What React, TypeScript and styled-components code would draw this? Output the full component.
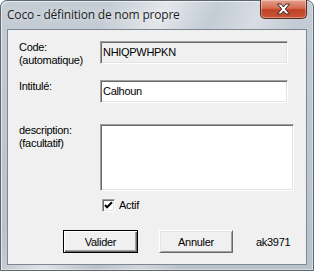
import styled, { createGlobalStyle } from 'styled-components'

const GlobalStyle = createGlobalStyle`
  html, body {
    margin: 0;
    padding: 0;
    background: #ffffff;
  }
`

const Window = styled.div`
  width: 314px;
  height: 271px;
  box-sizing: border-box;
  display: flex;
  flex-direction: column;
  padding: 0 6px 5px;
  border: 1px solid #5d6770;
  border-radius: 7px 7px 0 0;
  background:
    linear-gradient(115deg, rgba(255, 255, 255, 0) 25%, rgba(255, 255, 255, 0.55) 38%, rgba(255, 255, 255, 0) 50%, rgba(255, 255, 255, 0.35) 60%, rgba(255, 255, 255, 0) 70%),
    linear-gradient(180deg, #c4ccd5 0%, #bfc7cf 40%, #b9c1c9 100%);
  box-shadow: inset 1px 1px 0 rgba(255, 255, 255, 0.6), inset -1px -1px 0 rgba(255, 255, 255, 0.4);
`

const TitleBar = styled.div`
  height: 28px;
  display: flex;
  align-items: flex-start;
  justify-content: space-between;
`

const Title = styled.span`
  padding-top: 6px;
  font-family: 'Open Sans', 'Liberation Sans', sans-serif;
  font-size: 12px;
  line-height: 16px;
  color: #1e1e1e;
  letter-spacing: -0.2px;
  text-shadow: 0 0 6px rgba(255, 255, 255, 0.9);
`

const CloseButton = styled.div`
  width: 47px;
  height: 19px;
  margin-top: -1px;
  box-sizing: border-box;
  display: flex;
  align-items: center;
  justify-content: center;
  border: 1px solid #5a2a22;
  border-top: none;
  border-radius: 0 0 5px 5px;
  background: linear-gradient(180deg, #e6a090 0%, #d56c52 45%, #bf4226 55%, #cc5434 100%);
  box-shadow: inset 0 0 0 1px rgba(255, 255, 255, 0.35);
`

const Client = styled.div`
  flex: 1;
  border: 1px solid #7e8892;
  background: #f0f0f0;
  font-family: 'Liberation Sans', Arial, sans-serif;
  font-size: 11px;
  line-height: 13px;
  letter-spacing: -0.3px;
  color: #000000;
  display: flex;
  flex-direction: column;
  padding: 11px 0 0 11px;
`

const Row = styled.div<{ $gap: number; $height: number }>`
  display: flex;
  align-items: flex-start;
  height: ${({ $height }) => $height}px;
  margin-bottom: ${({ $gap }) => $gap}px;
`

const Label = styled.div`
  width: 81px;
  white-space: nowrap;
`

const Field = styled.input<{ $readOnly?: boolean }>`
  width: 188px;
  height: 23px;
  box-sizing: border-box;
  margin: 0;
  padding: 0 2px 1px;
  font-family: 'Liberation Sans', Arial, sans-serif;
  font-size: 11px;
  letter-spacing: -0.3px;
  color: #000000;
  outline: none;
  background: ${({ $readOnly }) => ($readOnly ? '#f0f0f0' : '#ffffff')};
  border-style: solid;
  border-width: 1px;
  border-color: #a0a0a0 #ffffff #ffffff #a0a0a0;
  box-shadow: inset 1px 1px 0 #696969, inset -1px -1px 0 #e3e3e3;
`

const TextArea = styled.textarea`
  width: 194px;
  height: 67px;
  box-sizing: border-box;
  margin: 0;
  padding: 2px;
  resize: none;
  outline: none;
  background: #ffffff;
  border-style: solid;
  border-width: 1px;
  border-color: #a0a0a0 #ffffff #ffffff #a0a0a0;
  box-shadow: inset 1px 1px 0 #696969, inset -1px -1px 0 #e3e3e3;
`

const CheckRow = styled.label`
  display: flex;
  align-items: center;
  gap: 4px;
  margin-left: 83px;
  margin-bottom: 18px;
  height: 13px;
`

const CheckBox = styled.span`
  width: 13px;
  height: 13px;
  box-sizing: border-box;
  display: flex;
  align-items: center;
  justify-content: center;
  background: #ffffff;
  border-style: solid;
  border-width: 1px;
  border-color: #a0a0a0 #ffffff #ffffff #a0a0a0;
  box-shadow: inset 1px 1px 0 #696969, inset -1px -1px 0 #e3e3e3;
`

const ButtonRow = styled.div`
  display: flex;
  align-items: center;
  gap: 21px;
  padding-left: 44px;
`

const Button = styled.button<{ $default?: boolean; $width: number }>`
  width: ${({ $width }) => $width}px;
  height: 23px;
  box-sizing: border-box;
  margin: 0;
  padding: 0;
  font-family: 'Liberation Sans', Arial, sans-serif;
  font-size: 11px;
  letter-spacing: -0.3px;
  color: #000000;
  background: #f0f0f0;
  outline: none;
  border: 1px solid;
  border-color: ${({ $default }) => ($default ? '#000000' : '#ffffff #696969 #696969 #ffffff')};
  box-shadow: ${({ $default }) =>
    $default
      ? 'inset 1px 1px 0 #ffffff, inset -1px -1px 0 #696969, inset -2px -2px 0 #a0a0a0'
      : 'inset 1px 1px 0 #e3e3e3, inset -1px -1px 0 #a0a0a0'};
`

const Code = styled.span`
  margin-left: 2px;
  padding-top: 2px;
`

export default function App(): JSX.Element {
  return (
    <>
      <GlobalStyle />
      <Window>
        <TitleBar>
          <Title>Coco - définition de nom propre</Title>
          <CloseButton>
            <svg width="15" height="12" viewBox="0 0 15 12">
              <path
                d="M1.5 1 L5 1 L7.5 4 L10 1 L13.5 1 L9.3 6 L13.5 11 L10 11 L7.5 8 L5 11 L1.5 11 L5.7 6 Z"
                fill="#ffffff"
                stroke="#3a2a2a"
                strokeWidth="1"
                strokeLinejoin="round"
              />
            </svg>
          </CloseButton>
        </TitleBar>
        <Client>
          <Row $gap={16} $height={23}>
            <Label>
              Code:
              <br />
              (automatique)
            </Label>
            <Field $readOnly readOnly value="NHIQPWHPKN" />
          </Row>
          <Row $gap={21} $height={23}>
            <Label>Intitulé:</Label>
            <Field readOnly value="Calhoun" />
          </Row>
          <Row $gap={8} $height={67}>
            <Label>
              description:
              <br />
              (facultatif)
            </Label>
            <TextArea readOnly value="" />
          </Row>
          <CheckRow>
            <CheckBox>
              <svg width="9" height="9" viewBox="0 0 9 9">
                <path d="M1 4 L3 6.3 L8 1.2" fill="none" stroke="#000000" strokeWidth="2" />
              </svg>
            </CheckBox>
            Actif
          </CheckRow>
          <ButtonRow>
            <Button $default $width={75}>
              Valider
            </Button>
            <Button $width={74}>Annuler</Button>
            <Code>ak3971</Code>
          </ButtonRow>
        </Client>
      </Window>
    </>
  )
}
